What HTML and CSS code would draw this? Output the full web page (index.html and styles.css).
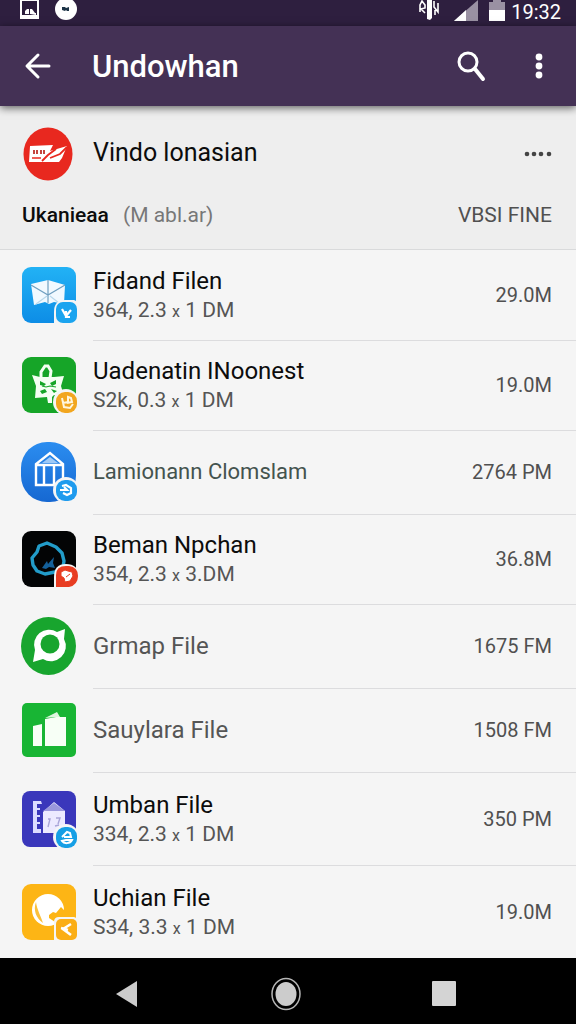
FILE: index.html
```html
<!DOCTYPE html>
<html lang="en">
<head>
    <meta charset="UTF-8">
    <meta name="viewport" content="width=device-width, initial-scale=1">
    <title>Undowhan</title>
    <link rel="stylesheet" href="styles.css">
</head>
<body>
<div class="status">
    <svg class="status_icon" width="20" height="20" viewBox="0 0 20 20">
        <path d="M0 0h19v19H0z" fill="#fff"/>
        <path d="M2 1h15v14H2z" fill="#2b1c3c"/>
        <path d="M5 14v-3l2-2h2v5zM10 14V9h2l3 4 1 0v2z" fill="#fff"/>
    </svg>
    <svg class="status_icon" width="22" height="20" viewBox="0 0 22 20">
        <circle cx="11" cy="9" r="11" fill="#fff"/>
        <path d="M7 7l3 0 1 1 3-1v4l-2 0-1-1-1 1-3-1z" fill="#1d3447"/>
    </svg>
    <span class="space"></span>
    <svg width="22" height="20" viewBox="0 0 22 20" fill="none" stroke="#fff" stroke-width="1.600">
        <path d="M2 12V5l2-4 3 4v3l-4 1 4 4M16 1v6l4 5V3M17 10v5"/>
        <path d="M9 0h5v18l-2 2-3-1z" fill="#fff" stroke="none"/>
    </svg>
    <svg class="signal" width="24" height="21" viewBox="0 0 24 21">
        <path d="M24 0v21H0z" fill="#9a91a3"/>
        <path d="M12 10v11H0z" fill="#fff"/>
    </svg>
    <svg class="battery" width="16" height="21" viewBox="0 0 16 21">
        <path d="M4 0h8v2h4v8H0V2h4z" fill="#9a91a3"/>
        <path d="M0 10h16v11H0z" fill="#fff"/>
    </svg>
    <span class="time">19:32</span>
</div>

<header class="bar">
    <button type="button" class="icon_btn back" aria-label="Back">
        <svg width="28" height="28" viewBox="0 0 28 28" fill="none" stroke="#fff" stroke-width="3" stroke-linecap="round" stroke-linejoin="round">
            <path d="M25 14H4M14 3L3 14l11 11"/>
        </svg>
    </button>
    <h1>Undowhan</h1>
    <button type="button" class="icon_btn" aria-label="Search">
        <svg width="30" height="32" viewBox="0 0 30 32" fill="none" stroke="#fff" stroke-linecap="round">
            <circle cx="12" cy="12" r="9" stroke-width="3"/>
            <path d="M19 19l8 10" stroke-width="4"/>
        </svg>
    </button>
    <button type="button" class="icon_btn more" aria-label="More options">
        <svg width="8" height="26" viewBox="0 0 8 26" fill="#fff">
            <circle cx="4" cy="4" r="3.400"/>
            <circle cx="4" cy="13" r="3.400"/>
            <circle cx="4" cy="22" r="3.400"/>
        </svg>
    </button>
</header>

<main>
    <section class="account">
        <div class="account_row">
            <svg class="icon" width="54" height="54" viewBox="0 0 54 54">
                <ellipse cx="26" cy="27" rx="24.500" ry="26.500" fill="#e8281f"/>
                <path d="M8 19l23-1-3 6 17-5-5 12-3 4H7z" fill="#fff"/>
                <path d="M20 34l6-6 8-6M28 31l10-4 7-7" fill="none" stroke="#e8281f" stroke-width="1.800"/>
                <path d="M10 31h9" stroke="#e8281f" stroke-width="1.500"/>
                <path d="M11 23h2v4h-2zM14 23h2v4h-2zM18 23h2v4h-2zM21 23h2v4h-2z" fill="#c3453f"/>
            </svg>
            <h2>Vindo lonasian</h2>
            <button type="button" class="icon_btn dots" aria-label="Account options">
                <svg width="28" height="6" viewBox="0 0 28 6" fill="#444">
                    <circle cx="3" cy="3" r="2.300"/>
                    <circle cx="10" cy="3" r="2.300"/>
                    <circle cx="17" cy="3" r="2.300"/>
                    <circle cx="25" cy="3" r="2.300"/>
                </svg>
            </button>
        </div>
        <div class="account_info">
            <b>Ukanieaa</b>
            <span class="light">(M abl.ar)</span>
            <span class="size">VBSI FINE</span>
        </div>
    </section>

    <ul class="list">
        <li class="item">
            <svg class="icon" width="56" height="60" viewBox="0 0 56 60">
                <defs>
                    <linearGradient id="sky" x1="0" y1="0" x2="0" y2="1">
                        <stop offset="0" stop-color="#22b2f5"/>
                        <stop offset="1" stop-color="#0d8de6"/>
                    </linearGradient>
                </defs>
                <rect x="0" y="2" width="54" height="56" rx="9" fill="url(#sky)"/>
                <path d="M9 19l17-4 17 5-1 19-10-2-5 2-4-2-11 3z" fill="#f1f9ff"/>
                <path d="M9 20l17 10 17-10M26 15v23" fill="none" stroke="#6f9fc0" stroke-width="1.200"/>
                <path d="M25 31L14 39M28 31l9 7" fill="none" stroke="#b9d8ec" stroke-width="1.200"/>
                <path d="M32 58V47q0-12 11-12h9l4 2v21z" fill="#f5f5f5"/>
                <rect x="34" y="37" width="21" height="21" rx="7" fill="#1ba4ef"/>
                <path d="M40 44l4 7 5-6M44 46v6h4" fill="none" stroke="#fff" stroke-width="2.200"/>
            </svg>
            <div class="text">
                <h3>Fidand Filen</h3>
                <p>364, 2.3 <small>x</small> 1 DM</p>
            </div>
            <span class="size">29.0M</span>
        </li>
        <li class="item">
            <svg class="icon" width="56" height="60" viewBox="0 0 56 60">
                <rect x="0" y="2" width="54" height="56" rx="9" fill="#16a528"/>
                <path d="M19 23v-6l4-6h3l3 5-1 7" fill="none" stroke="#f4fff3" stroke-width="3"/>
                <path d="M10 20l8 2h14l10-1-3 10 3 10-10-1-2 2v6h-4l-1-6-12 1 1-12z" fill="#f4fff3"/>
                <path d="M18 26l6 3-2 2-4-1zM28 28l6-3v4l-4 2zM18 36l5-2 2 3-5 2zM29 34l6 2-3 2z" fill="#16a528"/>
                <path d="M20 31l4 1 4-1 6 1" fill="none" stroke="#16a528" stroke-width="1.200"/>
                <circle cx="44" cy="47" r="13" fill="#f5f5f5"/>
                <rect x="34" y="37" width="21" height="21" rx="9" fill="#f2a61f"/>
                <path d="M40 43l2 9 6 1 3-4M41 48l5-1 0-5 3 1 1 4-5 1" fill="none" stroke="#fff6dd" stroke-width="2"/>
            </svg>
            <div class="text">
                <h3>Uadenatin INoonest</h3>
                <p>S2k, 0.3 <small>x</small> 1 DM</p>
            </div>
            <span class="size">19.0M</span>
        </li>
        <li class="item">
            <svg class="icon" width="56" height="60" viewBox="0 0 56 60">
                <defs>
                    <linearGradient id="blue" x1="0" y1="0" x2="0" y2="1">
                        <stop offset="0" stop-color="#2b8df0"/>
                        <stop offset="1" stop-color="#1668d2"/>
                    </linearGradient>
                </defs>
                <rect x="-1" y="0" width="55" height="60" rx="26" fill="url(#blue)"/>
                <path d="M14 43V22l14-11 13 11v21zM14 23h27M22 24v19M32 24v19" fill="none" stroke="#fff" stroke-width="2.400"/>
                <path d="M20 21l8-6 8 6z" fill="#9fcaf7"/>
                <circle cx="44" cy="48" r="13" fill="#f5f5f5"/>
                <rect x="34" y="38" width="21" height="21" rx="9" fill="#1f9bee"/>
                <path d="M40 44l4-1 5 3 0 5-4 2-4-2M38 48h7l-3-3" fill="none" stroke="#fff" stroke-width="2.200"/>
            </svg>
            <div class="text">
                <h3 class="muted teal">Lamionann Clomslam</h3>
            </div>
            <span class="size">2764 PM</span>
        </li>
        <li class="item">
            <svg class="icon" width="56" height="60" viewBox="0 0 56 60">
                <rect x="0" y="2" width="54" height="56" rx="9" fill="#030405"/>
                <path d="M10 29l5-6 2-6 8-3 9 4 6 6 2 8-1 6-8 5-10 2-8-3-4-6z" fill="none" stroke="#229cc9" stroke-width="3.400" stroke-linejoin="round"/>
                <path d="M20 39l5-7 1 3 6-7-1 6 2 5-6-1-3 2z" fill="#14609a"/>
                <path d="M32 60V48q0-13 12-13t13 12v13z" fill="#f5f5f5"/>
                <path d="M34 58V46q0-9 10-9h3q9 1 9 10t-9 11z" fill="#e83d22"/>
                <path d="M39 43l4-2 3 1 4 1 1 4-3 5-5 1-1-4-3-2zM44 48l4-3" fill="#fff" stroke="#e83d22"/>
            </svg>
            <div class="text">
                <h3>Beman Npchan</h3>
                <p>354, 2.3 <small>x</small> 3.DM</p>
            </div>
            <span class="size">36.8M</span>
        </li>
        <li class="item">
            <svg class="icon" width="56" height="60" viewBox="0 0 56 60">
                <ellipse cx="26.500" cy="30" rx="27.500" ry="29" fill="#18a52e"/>
                <path d="M11 46l2-12a15 15 0 0 1 22-18l8-3-1 10a15 15 0 0 1-21 20z" fill="#fff"/>
                <circle cx="28" cy="28" r="9.500" fill="#18a52e"/>
            </svg>
            <div class="text">
                <h3 class="muted">Grmap File</h3>
            </div>
            <span class="size">1675 FM</span>
        </li>
        <li class="item">
            <svg class="icon" width="56" height="60" viewBox="0 0 56 60">
                <rect x="0" y="3" width="54" height="54" rx="5" fill="#18b534"/>
                <path d="M11 26l9-2v22h-9zM23 19l11-2h10v29H23z" fill="#f7fff6"/>
                <path d="M23 18l12-6 3 5-4 0z" fill="#dff5df"/>
            </svg>
            <div class="text">
                <h3 class="muted">Sauylara File</h3>
            </div>
            <span class="size">1508 FM</span>
        </li>
        <li class="item tall">
            <svg class="icon" width="56" height="60" viewBox="0 0 56 60">
                <rect x="0" y="2" width="54" height="56" rx="8" fill="#3a37bb"/>
                <path d="M11 12h8l1 3h-5v4h3v2h-3v5h3v2h-3v5h3v2h-3v5h4v4h-8z" fill="#dcdcff"/>
                <path d="M21 23l11-10 11 9v22H21z" fill="#eceaff"/>
                <path d="M21 22l11-8 11 8z" fill="#9a98dc"/>
                <path d="M26 30h2l-2 8M34 29l4 0-2 6M33 37l4-1" fill="none" stroke="#a9a5d8" stroke-width="1.400"/>
                <circle cx="44" cy="48" r="13" fill="#f5f5f5"/>
                <rect x="34" y="38" width="21" height="21" rx="9" fill="#169fe5"/>
                <path d="M40 48l5-5 3 1 1 4h-7M40 52c2 3 8 3 10-1l-6 0z" fill="none" stroke="#fff" stroke-width="2"/>
            </svg>
            <div class="text">
                <h3>Umban File</h3>
                <p>334, 2.3 <small>x</small> 1 DM</p>
            </div>
            <span class="size">350 PM</span>
        </li>
        <li class="item tall">
            <svg class="icon" width="56" height="60" viewBox="0 0 56 60">
                <rect x="0" y="2" width="54" height="56" rx="9" fill="#fdb515"/>
                <ellipse cx="26" cy="28" rx="16" ry="16" fill="#fff"/>
                <path d="M14 20c-3 8 0 16 7 21-2-7-6-13-7-21z" fill="#fbc03c"/>
                <path d="M27 33l4-3 3 1 5-6 3 3v12h-9l-6-4z" fill="#fdb515"/>
                <path d="M32 60V40q0-5 5-5h15l5 2v23z" fill="#f5f5f5"/>
                <rect x="34" y="37" width="21" height="21" rx="5" fill="#fbae16"/>
                <path d="M49 42l-8 5 8 6M39 46l7 2" fill="none" stroke="#fff" stroke-width="2.600"/>
            </svg>
            <div class="text">
                <h3>Uchian File</h3>
                <p>S34, 3.3 <small>x</small> 1 DM</p>
            </div>
            <span class="size">19.0M</span>
        </li>
    </ul>
</main>

<nav class="nav">
    <button type="button" class="icon_btn" aria-label="Back">
        <svg width="34" height="34" viewBox="0 0 34 34"><path d="M27 4v26L6 17z" fill="#ccc"/></svg>
    </button>
    <button type="button" class="icon_btn" aria-label="Home">
        <svg width="34" height="34" viewBox="0 0 34 34">
            <ellipse cx="17" cy="17" rx="14" ry="15.500" fill="none" stroke="#b5b5b5" stroke-width="1.500"/>
            <ellipse cx="17" cy="17" rx="10.500" ry="12" fill="#ccc"/>
        </svg>
    </button>
    <button type="button" class="icon_btn" aria-label="Recent apps">
        <svg width="34" height="34" viewBox="0 0 34 34"><rect x="5" y="4" width="24" height="25" rx="1" fill="#d4d4d4"/></svg>
    </button>
</nav>
</body>
</html>
```
FILE: styles.css
```css
* {box-sizing: border-box;}
body {
    margin: 0;
    min-height: 100vh;
    display: flex;
    flex-direction: column;
    background: #f5f5f5;
    color: #0c0c0c;
    font-family: Roboto, "Liberation Sans", sans-serif;
}
h1, h2, h3, p, ul {margin: 0; padding: 0;}
svg {display: block; flex-shrink: 0; overflow: visible;}

/* status bar */
.status {
    display: flex;
    height: 26px;
    padding: 0 15px 0 20px;
    background: #2e1f3f;
}
.status_icon {margin-right: 15px;}
.space {flex: 1;}
.signal {margin-left: 14px;}
.battery {margin: 0 6px 0 11px;}
.time {
    color: #fff;
    font-size: 20px;
    line-height: 24px;
}

/* app bar */
.bar {
    position: relative;
    display: flex;
    align-items: center;
    height: 80px;
    padding: 0 33px 0 24px;
    background: #443155;
    box-shadow: 0 2px 8px rgba(0, 0, 0, .6);
}
.bar h1 {
    flex: 1;
    color: #fff;
    font-size: 31px;
    font-weight: 500;
}
.icon_btn {
    padding: 0;
    border: none;
    background: none;
    cursor: pointer;
}
.back {margin-right: 40px;}
.more {margin-left: 49px;}

/* account */
.account {
    padding: 20px 24px 20px 22px;
    background: #eee;
    border-bottom: 1px solid #d9dadb;
}
.account_row {
    display: flex;
    align-items: center;
    height: 56px;
}
.account h2 {
    flex: 1;
    font-size: 25px;
    line-height: 30px;
    padding-bottom: 3px;
    font-weight: 400;
}
.account .icon {width: 54px; margin-right: 17px;}
.account_info {
    display: flex;
    align-items: center;
    gap: 14px;
    height: 28px;
    margin-top: 19px;
    font-size: 21px;
}
.account_info b {font-weight: 500;}
.light {color: #777;}

/* file list */
.list {list-style: none;}
.item {
    display: flex;
    align-items: center;
    position: relative;
    min-height: 84px;
    padding: 16px 24px 16px 22px;
}
.item.tall {padding-top: 18px; padding-bottom: 17px;}
.item + .item:before {
    content: "";
    position: absolute;
    top: 0;
    left: 93px;
    right: 0;
    border-top: 1px solid #dcdcde;
}
.item .icon {margin: -4px 15px -4px 0;}
.text {flex: 1;}
.item h3 {
    font-size: 24px;
    line-height: 30px;
    font-weight: 400;
}
.item p {
    color: #555;
    font-size: 21px;
    line-height: 28px;
}
.item small {font-size: 16px; line-height: 1;}
.item h3.muted {color: #555;}
.item h3.teal {color: #44534f; font-size: 22px;}
.size {
    margin-left: auto;
    color: #505050;
    font-size: 21px;
}
.item .size {font-size: 20px;}

/* system buttons */
.nav {
    display: flex;
    justify-content: space-between;
    align-items: center;
    height: 66px;
    margin-top: auto;
    padding: 5px 115px 0 110px;
    background: #000;
}
```
